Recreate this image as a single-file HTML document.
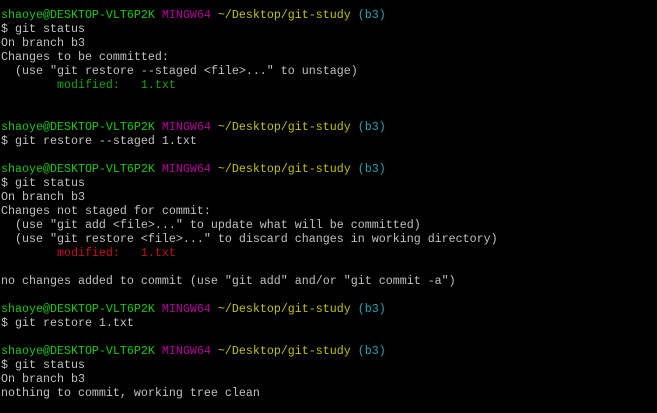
<!DOCTYPE html>
<html><head><meta charset="utf-8"><style>
html,body{margin:0;padding:0;background:#000;width:657px;height:413px;overflow:hidden}
pre{margin:0;padding:8px 0 0 1px;font-family:"Liberation Mono",monospace;font-size:11.67px;line-height:14px;color:#c0c0c0;white-space:pre}
.g{color:#16c60c}.m{color:#b4009e}.y{color:#c1c100}.c{color:#2aa1b3}.gm{color:#13a10e}.r{color:#c50f1f}
</style></head><body><pre><span class="g">shaoye@DESKTOP-VLT6P2K</span> <span class="m">MINGW64</span> <span class="y">~/Desktop/git-study</span> <span class="c">(b3)</span>
$ git status
On branch b3
Changes to be committed:
  (use "git restore --staged &lt;file&gt;..." to unstage)
<span class="gm">        modified:   1.txt</span>


<span class="g">shaoye@DESKTOP-VLT6P2K</span> <span class="m">MINGW64</span> <span class="y">~/Desktop/git-study</span> <span class="c">(b3)</span>
$ git restore --staged 1.txt

<span class="g">shaoye@DESKTOP-VLT6P2K</span> <span class="m">MINGW64</span> <span class="y">~/Desktop/git-study</span> <span class="c">(b3)</span>
$ git status
On branch b3
Changes not staged for commit:
  (use "git add &lt;file&gt;..." to update what will be committed)
  (use "git restore &lt;file&gt;..." to discard changes in working directory)
<span class="r">        modified:   1.txt</span>

no changes added to commit (use "git add" and/or "git commit -a")

<span class="g">shaoye@DESKTOP-VLT6P2K</span> <span class="m">MINGW64</span> <span class="y">~/Desktop/git-study</span> <span class="c">(b3)</span>
$ git restore 1.txt

<span class="g">shaoye@DESKTOP-VLT6P2K</span> <span class="m">MINGW64</span> <span class="y">~/Desktop/git-study</span> <span class="c">(b3)</span>
$ git status
On branch b3
nothing to commit, working tree clean</pre></body></html>
